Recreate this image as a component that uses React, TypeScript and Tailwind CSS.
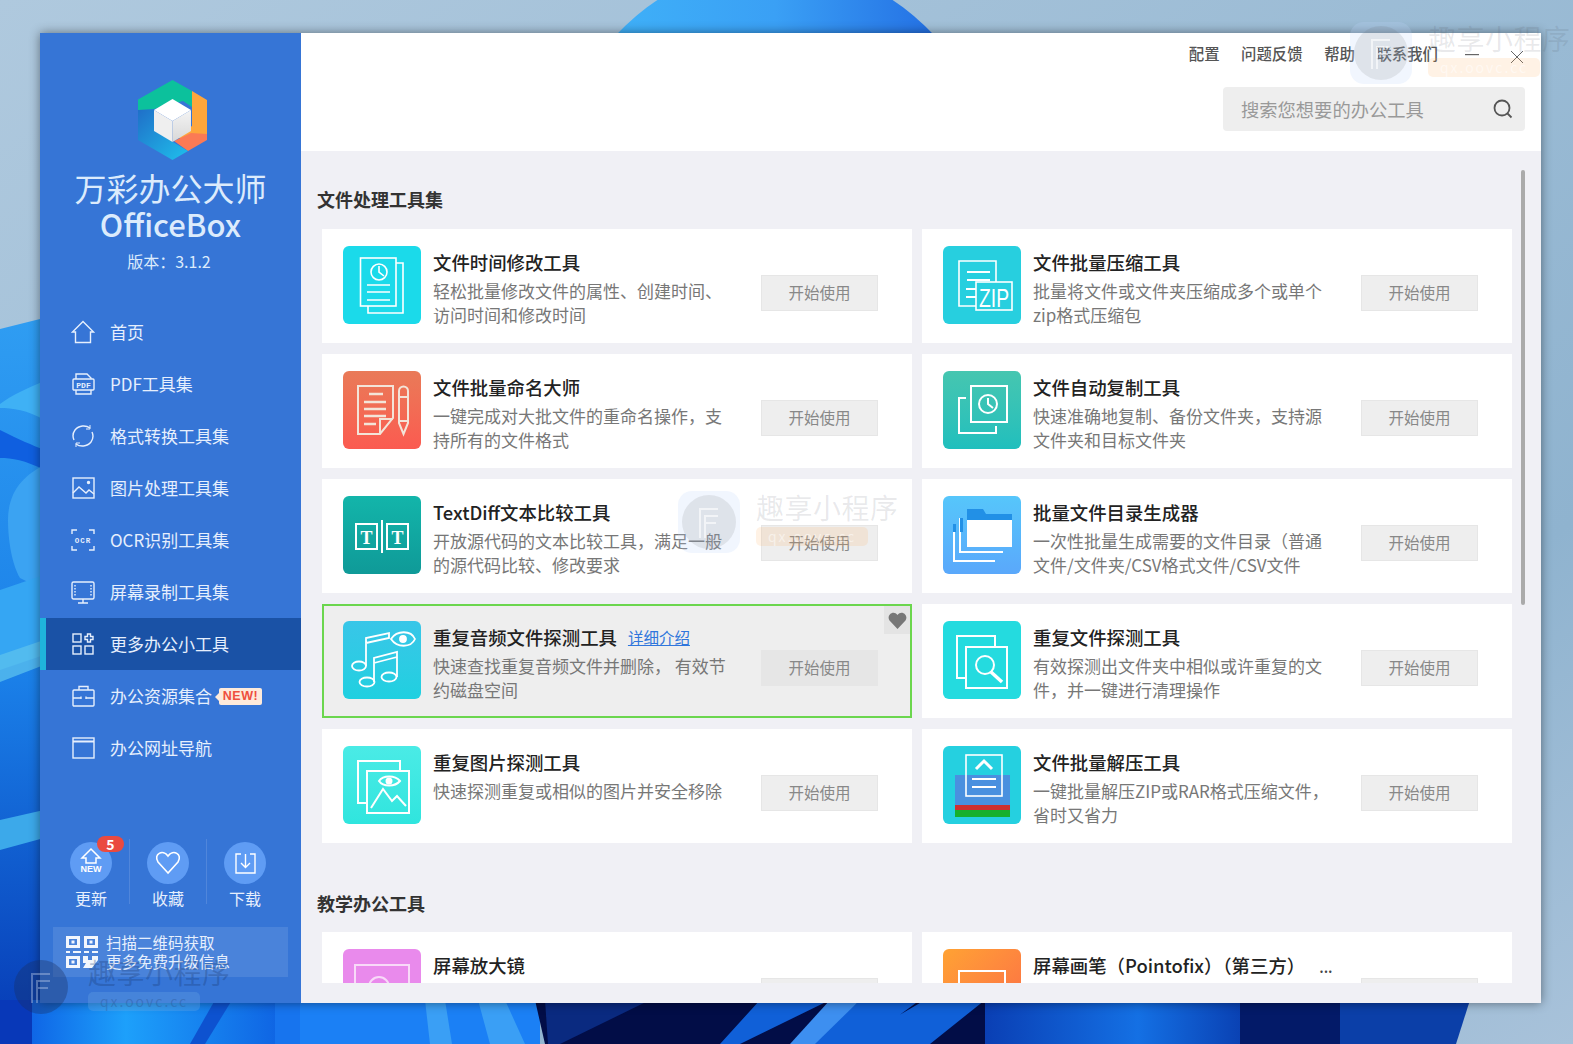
import { ReactNode } from 'react'

const FONT = '"Noto Sans CJK SC", "Noto Sans", sans-serif'

function Wallpaper() {
  return (
    <svg className="absolute inset-0" width="1573" height="1044" viewBox="0 0 1573 1044">
      <defs>
        <linearGradient id="sky" x1="0" y1="0" x2="1" y2="1">
          <stop offset="0" stopColor="#afc9de" />
          <stop offset="0.75" stopColor="#8fb3cf" />
          <stop offset="1" stopColor="#a8c2da" />
        </linearGradient>
        <linearGradient id="petal" x1="0" y1="0" x2="1" y2="0">
          <stop offset="0" stopColor="#3fb0f8" />
          <stop offset="0.5" stopColor="#3aa0f5" />
          <stop offset="1" stopColor="#2470e4" />
        </linearGradient>
        <linearGradient id="left" x1="0" y1="0" x2="0" y2="1">
          <stop offset="0" stopColor="#2f9df2" />
          <stop offset="0.5" stopColor="#1a7fe8" />
          <stop offset="1" stopColor="#0639b4" />
        </linearGradient>
        <linearGradient id="bright" x1="0" y1="0" x2="1" y2="0">
          <stop offset="0" stopColor="#0f66e6" />
          <stop offset="0.35" stopColor="#1da0fb" />
          <stop offset="1" stopColor="#0d5ce0" />
        </linearGradient>
        <linearGradient id="mid" x1="0" y1="0" x2="1" y2="0">
          <stop offset="0" stopColor="#0a3fb4" />
          <stop offset="0.6" stopColor="#1470e4" />
          <stop offset="1" stopColor="#0a42b4" />
        </linearGradient>
      </defs>
      <rect width="1573" height="1044" fill="url(#sky)" />
      <path d="M615 36C660 -10 700 -30 775 -30C850 -30 890 -10 935 36Z" fill="url(#petal)" />
      <path d="M0 329L44 318V1044H0Z" fill="url(#left)" />
      <path d="M0 404C12 395 28 388 44 381V420C28 410 12 408 0 408Z" fill="#3fb1f5" />
      <path d="M0 430C20 440 32 445 44 450V470C25 460 12 458 0 458Z" fill="#0f5fe0" />
      <path d="M8 520C8 490 25 475 44 465V590L20 578C12 565 8 540 8 520Z" fill="#3ba3f2" />
      <path d="M0 590L44 575V655L0 670Z" fill="#35a6f3" />
      <path d="M0 655L44 640V665L0 682Z" fill="#5cc2ee" opacity="0.75" />
      <path d="M0 820L44 810V838L0 850Z" fill="#3ca9ea" />
      <rect x="0" y="1000" width="32" height="44" fill="#0838b8" />
      <rect x="32" y="1000" width="268" height="44" fill="url(#bright)" />
      <path d="M215 1000H232L205 1044H190Z" fill="#0d52d0" />
      <rect x="275" y="1000" width="30" height="44" fill="#1774ee" />
      <rect x="300" y="1000" width="240" height="44" fill="#1b80f5" />
      <path d="M425 1000H445L452 1044H430ZM478 1000H505L525 1044H490Z" fill="#3a9ff5" />
      <path d="M535 1000H1000V1044H545Z" fill="#020d47" />
      <path d="M545 1000H650L560 1044H548Z" fill="#0a2a80" />
      <path d="M760 1000H830L740 1044H720ZM860 1000H920L860 1044H810ZM925 1000H985L930 1044H850Z" fill="#1060d8" />
      <path d="M830 1000H860L815 1044H790Z" fill="#3d8ff0" />
      <rect x="985" y="1000" width="255" height="44" fill="url(#mid)" />
      <rect x="1240" y="1000" width="100" height="44" fill="#031a68" />
      <path d="M1340 1000H1470L1456 1044H1340Z" fill="#0b3fa8" />
    </svg>
  )
}

function Watermark({ className, dark }: { className: string; dark?: boolean }) {
  return (
    <div className={`absolute flex items-start gap-[16px] pointer-events-none ${className}`}>
      <div className={`w-[62px] h-[62px] rounded-[14px] flex items-center justify-center ${dark ? '' : 'bg-[rgba(190,215,250,0.22)]'}`}>
        <div className={`w-[54px] h-[54px] rounded-full flex items-center justify-center ${dark ? 'bg-[rgba(25,45,95,0.35)]' : 'bg-[rgba(90,90,90,0.12)]'}`}>
          <svg width="24" height="32" viewBox="0 0 24 32" fill="none" stroke={dark ? 'rgba(190,205,235,0.4)' : 'rgba(255,255,255,0.6)'} strokeWidth="2">
            <path d="M3 32V3H21M8 32V10H21M8 17H19" />
          </svg>
        </div>
      </div>
      <div className="flex flex-col items-start -mt-[2px]">
        <div className={`text-[28px] leading-[36px] tracking-[0.5px] font-normal whitespace-nowrap ${dark ? 'text-[rgba(25,55,110,0.3)]' : 'text-[rgba(80,85,95,0.13)] font-bold'}`}>趣享小程序</div>
        <div className={`mt-[2px] w-[112px] h-[19px] rounded-[5px] text-[14px] leading-[19px] tracking-[2px] text-center ${dark ? 'bg-[rgba(110,170,230,0.3)] text-[rgba(40,80,140,0.35)]' : 'bg-[rgba(255,170,80,0.15)] text-[rgba(255,255,255,0.5)]'}`}>qx.oovc.cc</div>
      </div>
    </div>
  )
}

function Logo() {
  return (
    <svg width="70" height="80" viewBox="0 0 70 80" className="ml-[98px]">
      <defs>
        <linearGradient id="logoBlue" x1="0" y1="0" x2="1" y2="1">
          <stop offset="0" stopColor="#1f6fc8" />
          <stop offset="1" stopColor="#1fc0ec" />
        </linearGradient>
        <linearGradient id="cubeR" x1="0" y1="0" x2="0" y2="1">
          <stop offset="0" stopColor="#f4f4f4" />
          <stop offset="1" stopColor="#d8d8d8" />
        </linearGradient>
      </defs>
      <path d="M0 19.5L34.5 0L54 11V27L45 21L16 29L0 41Z" fill="#0cc19c" />
      <path d="M54 11L69 20V54L50 60L36 57L54 46Z" fill="#fea63c" />
      <path d="M36 61L53 53L69 54V60L50 71Z" fill="#fb7a55" />
      <path d="M0 30L16 29V50L35 62L50 71L34.5 80L0 60Z" fill="url(#logoBlue)" />
      <path d="M34.5 19L53 30L34.5 41L16 30Z" fill="#ffffff" />
      <path d="M16 30L34.5 41V62L16 51Z" fill="#efefef" />
      <path d="M53 30L34.5 41V62L53 51Z" fill="url(#cubeR)" />
    </svg>
  )
}

const navStroke = { fill: 'none', stroke: '#e6effd', strokeWidth: 1.4 }

function NavIcon({ children }: { children: ReactNode }) {
  return (
    <svg width="24" height="24" viewBox="0 0 24 24" className="shrink-0" {...navStroke}>
      {children}
    </svg>
  )
}

const navItems: { label: ReactNode; icon: ReactNode; active?: boolean }[] = [
  {
    label: '首页',
    icon: <path d="M1.5 12L12 1.5L22.5 12H19.5V22.5H4.5V12Z" />,
  },
  {
    label: 'PDF工具集',
    icon: (
      <>
        <path d="M5 7V2H16L20 6V7M5 18V22H20V18" />
        <rect x="2" y="7" width="21" height="11" rx="1" />
        <text x="12.5" y="15.6" fontSize="8" fontWeight="700" textAnchor="middle" fill="#e6effd" stroke="none" fontFamily="Liberation Mono">PDF</text>
      </>
    ),
  },
  {
    label: '格式转换工具集',
    icon: (
      <>
        <path d="M3 16A10 10 0 0 1 4 6C8 1 15 1 19 4" />
        <path d="M21 8A10 10 0 0 1 20 18C16 23 9 23 5 20" />
        <path d="M19 1V5H15M5 23V19H9" strokeWidth="1" />
      </>
    ),
  },
  {
    label: '图片处理工具集',
    icon: (
      <>
        <rect x="2" y="2" width="21" height="20" />
        <path d="M2 17L8 11L15 17L18 14L23 18" />
        <circle cx="17.5" cy="6.5" r="1" fill="#e6effd" />
      </>
    ),
  },
  {
    label: 'OCR识别工具集',
    icon: (
      <>
        <path d="M1 6V2H6M18 2H23V6M1 18V22H6M18 22H23V18" />
        <text x="12" y="15" fontSize="7.5" fontWeight="700" textAnchor="middle" letterSpacing="1" fill="#e6effd" stroke="none" fontFamily="Liberation Mono">OCR</text>
      </>
    ),
  },
  {
    label: '屏幕录制工具集',
    icon: (
      <>
        <rect x="1" y="2" width="22" height="17" rx="1.5" />
        <path d="M12 19V23M7 23H17" />
        <path d="M4 5V16M20 5V16" strokeDasharray="1.5 1.5" />
      </>
    ),
  },
  {
    label: '更多办公小工具',
    active: true,
    icon: (
      <>
        <rect x="2" y="2" width="8" height="8" />
        <rect x="2" y="14" width="8" height="8" />
        <rect x="14" y="14" width="8" height="8" />
        <path d="M16.5 2H19.5V4.5H22V7.5H19.5V10H16.5V7.5H14V4.5H16.5Z" />
      </>
    ),
  },
  {
    label: (
      <span className="flex items-center">
        办公资源集合
        <span className="ml-[7px] relative w-[43px] h-[17px] rounded-[2px] bg-[#fdeadb] text-[#ef4f3e] text-[12.5px] leading-[17px] font-bold text-center tracking-[0.5px]" style={{ fontFamily: '"Liberation Sans", sans-serif' }}>
          <span className="absolute -left-[4px] top-[5px] w-0 h-0 border-y-[4px] border-r-[4px] border-y-transparent border-r-[#fdeadb]" />
          NEW!
        </span>
      </span>
    ),
    icon: (
      <>
        <rect x="2" y="6" width="21" height="16" rx="1" />
        <path d="M8 6V2.5H17V6M2 14H10M15 14H23M10 12.5V15M15 12.5V15" />
      </>
    ),
  },
  {
    label: '办公网址导航',
    icon: (
      <>
        <rect x="2" y="2" width="21" height="20" />
        <path d="M2 5.5H23" strokeWidth="2" />
      </>
    ),
  },
]

function Sidebar() {
  return (
    <aside className="w-[261px] h-full shrink-0 bg-[#3675d6] flex flex-col">
      <div className="pt-[47px] text-center text-[#dcebfc]">
        <Logo />
        <div className="mt-[7px] text-[32px] leading-[40px]">万彩办公大师</div>
        <div className="text-[31px] leading-[33px] font-medium">OfficeBox</div>
        <div className="mt-[10px] text-[16px] leading-[22px] pr-[3px]">版本：3.1.2</div>
      </div>
      <nav className="mt-[34px]">
        {navItems.map((item, i) => (
          <div
            key={i}
            className={`h-[52px] flex items-center gap-[15px] text-[17px] text-[#e6effd] ${
              item.active ? 'bg-[#1a52a6] border-l-[6px] border-[#1fb4dc] pl-[25px]' : 'pl-[31px]'
            }`}
          >
            <NavIcon>{item.icon}</NavIcon>
            {item.label}
          </div>
        ))}
      </nav>
      <div className="mt-[68px] flex pl-[13px] pr-[18px]">
        <BottomAction label="更新" badge>
          <path d="M21 7L30 16H26V21H16V16H12Z" fill="none" stroke="#fff" strokeWidth="1.5" />
          <text x="21" y="30" fontSize="9" fontWeight="700" textAnchor="middle" fill="#fff" fontFamily="Liberation Sans">NEW</text>
        </BottomAction>
        <div className="w-px h-[65px] -mt-[3px] bg-[rgba(255,255,255,0.13)]" />
        <BottomAction label="收藏">
          <path d="M21 31L11 20C6 12 16 7 21 14C26 7 36 12 31 20Z" fill="none" stroke="#fff" strokeWidth="1.6" />
        </BottomAction>
        <div className="w-px h-[65px] -mt-[3px] bg-[rgba(255,255,255,0.13)]" />
        <BottomAction label="下载">
          <path d="M17 12H12V31H31V12H26M21.5 12V25M17 21L21.5 25.5L26 21" fill="none" stroke="#fff" strokeWidth="1.4" />
        </BottomAction>
      </div>
      <div className="mt-[18px] mx-[13px] h-[50px] bg-[rgba(255,255,255,0.1)] flex items-center gap-[8px] pl-[13px] text-[#e6effd] text-[15.5px] leading-[19px]">
        <svg width="32" height="32" viewBox="0 0 32 32" className="shrink-0" fill="#f2f6fd">
          <path fillRule="evenodd" d="M0 0H14V12H0ZM3 3V9H11V3ZM18 0H32V12H18ZM21 3V9H29V3ZM0 20H14V32H0ZM3 23V29H11V23Z" />
          <path d="M5.5 4.5H8.5V7.5H5.5ZM23.5 4.5H26.5V7.5H23.5ZM5.5 24.5H8.5V27.5H5.5ZM0 15H4V17H0ZM7 15H15V17H7ZM18 15H23V17H18ZM26 15H32V17H26ZM17 20H22V24H26V20H32V24L26 32H17L20 27H17Z" />
        </svg>
        <div className="whitespace-pre-line">{'扫描二维码获取\n更多免费升级信息'}</div>
      </div>
    </aside>
  )
}

function BottomAction({ label, badge, children }: { label: string; badge?: boolean; children: ReactNode }) {
  return (
    <div className="flex-1 relative flex flex-col items-center">
      <div className="w-[42px] h-[42px] rounded-full bg-[#5f9cf4]">
        <svg width="42" height="42" viewBox="0 0 42 42">{children}</svg>
      </div>
      <div className="mt-[3px] text-[16px] leading-[22px] text-[#e6effd]">{label}</div>
      {badge && (
        <div className="absolute left-[44px] -top-[6px] w-[27px] h-[16px] rounded-full bg-[#ea4a3f] text-white text-[14px] leading-[16px] font-bold text-center">5</div>
      )}
    </div>
  )
}

const line = { fill: 'none', stroke: '#ffffff', strokeWidth: 1.6 }

function IconTime() {
  return (
    <g {...line}>
      <path d="M53 17H60V67H25V60" />
      <rect x="17.5" y="12" width="35.5" height="48" />
      <circle cx="36" cy="26" r="8" />
      <path d="M36 20V26L41 30M24 39H47M24 46H47M24 54H47" />
    </g>
  )
}
function IconRename() {
  return (
    <g fill="none" stroke="#f3e4d8" strokeWidth="2">
      <path d="M15 62V15H50V47L37 63H15Z" />
      <path d="M37 63V48H50" />
      <path d="M26 23H40M21 31H43M21 38H43M21 45H43M21 53H33" strokeWidth="2.6" />
      <path d="M56 20A4.5 4.5 0 0 1 65 20V52L60.5 63L56 52Z" />
      <path d="M56 26H65M56 50H65" />
    </g>
  )
}
function IconDiff() {
  return (
    <g fill="none" stroke="#ffffff" strokeWidth="2">
      <path d="M13 53V28H34V53ZM65 53V28H44V53ZM39 24V57" />
      <text x="23.5" y="48" fontSize="18" fontWeight="700" textAnchor="middle" fill="#fff" stroke="none" fontFamily="Liberation Serif">T</text>
      <text x="54.5" y="48" fontSize="18" fontWeight="700" textAnchor="middle" fill="#fff" stroke="none" fontFamily="Liberation Serif">T</text>
    </g>
  )
}
function IconAudio() {
  return (
    <g {...line} strokeWidth="1.8">
      <ellipse cx="16" cy="45" rx="7" ry="4.5" />
      <ellipse cx="24" cy="61" rx="7.5" ry="4.5" />
      <ellipse cx="46" cy="56" rx="7.5" ry="4.5" />
      <path d="M23 45V17L46 12V17L23 22M31 61V37L54 31V56M31 42L54 36" />
      <path d="M48 18C54 9 68 9 72 18C68 27 54 27 48 18Z" />
      <circle cx="60" cy="18" r="3" fill="#fff" />
    </g>
  )
}
function IconImage() {
  return (
    <g fill="none" stroke="#ffffff" strokeWidth="2">
      <path d="M24 57H15V15H57V25" />
      <rect x="24" y="25" width="42" height="42" />
      <path d="M28 62L40 43L49 55L54 50L63 60" />
      <path d="M36 35C40 29 52 29 57 35C52 41 40 41 36 35Z" />
      <circle cx="46" cy="35" r="2.5" fill="#fff" />
    </g>
  )
}
function IconMagnifier() {
  return (
    <g fill="none" stroke="#f8d9f8" strokeWidth="2">
      <rect x="12" y="16" width="54" height="54" />
      <circle cx="36" cy="38" r="10" />
    </g>
  )
}
function IconZip() {
  return (
    <g {...line}>
      <path d="M53 36V15H16V60H33" />
      <path d="M24 26H47M24 34H47M23 43H33M23 51H33" strokeWidth="2" />
      <rect x="33" y="36" width="36" height="28" />
      <text x="36" y="61" fontSize="25" textLength="30" lengthAdjust="spacingAndGlyphs" fill="#fff" stroke="none" fontFamily="Liberation Sans">ZIP</text>
    </g>
  )
}
function IconCopy() {
  return (
    <g {...line} strokeWidth="2">
      <rect x="28" y="15" width="36" height="36" />
      <path d="M23 27H16V62H53V55" />
      <circle cx="45" cy="33" r="9" />
      <path d="M45 27V33L50 37" />
    </g>
  )
}
function IconDir() {
  return (
    <g>
      <path d="M24 13H40L43 18H69V28H24Z" fill="#2290e6" />
      <rect x="24" y="24" width="45" height="27" fill="#ffffff" />
      <path d="M17 22V56H60M11 28V65H52" fill="none" stroke="#fff" strokeWidth="2" />
      <path d="M17 22H20V36H17ZM10 28H13V36H10Z" fill="#2290e6" />
    </g>
  )
}
function IconDup() {
  return (
    <g fill="none" stroke="#ffffff" strokeWidth="2">
      <path d="M23 57H14V15H52V26" />
      <rect x="23" y="26" width="41" height="41" />
      <circle cx="42" cy="44" r="9" />
      <path d="M48 51L59 61" strokeWidth="3.5" />
    </g>
  )
}
function IconUnzip() {
  return (
    <g>
      <rect x="12" y="29" width="55" height="30" fill="#4a90df" />
      <rect x="12" y="59" width="55" height="5" fill="#d02f2f" />
      <rect x="12" y="64" width="55" height="7" fill="#16b02c" />
      <rect x="23" y="9" width="36" height="41" fill="none" stroke="#fff" strokeWidth="1.6" />
      <path d="M33 23L41 15L49 23" fill="none" stroke="#fff" strokeWidth="3" />
      <path d="M29 33H53M29 41H53" stroke="#fff" strokeWidth="2" />
    </g>
  )
}
function IconPen() {
  return (
    <g fill="none" stroke="#ffffff" strokeWidth="2">
      <rect x="16" y="22" width="46" height="46" />
      <path d="M28 50L36 58L52 40" />
    </g>
  )
}

type Tool = { title: string; desc: string; bg: string; icon: ReactNode; hover?: boolean }

const fileTools: Tool[] = [
  { title: '文件时间修改工具', desc: '轻松批量修改文件的属性、创建时间、\n访问时间和修改时间', bg: 'bg-[#1bdaea]', icon: <IconTime /> },
  { title: '文件批量压缩工具', desc: '批量将文件或文件夹压缩成多个或单个\nzip格式压缩包', bg: 'bg-[#27cfdf]', icon: <IconZip /> },
  { title: '文件批量命名大师', desc: '一键完成对大批文件的重命名操作，支\n持所有的文件格式', bg: 'bg-gradient-to-b from-[#e97a58] to-[#fb5a50]', icon: <IconRename /> },
  { title: '文件自动复制工具', desc: '快速准确地复制、备份文件夹，支持源\n文件夹和目标文件夹', bg: 'bg-gradient-to-b from-[#45c6b0] to-[#1fbfbd]', icon: <IconCopy /> },
  { title: 'TextDiff文本比较工具', desc: '开放源代码的文本比较工具，满足一般\n的源代码比较、修改要求', bg: 'bg-gradient-to-b from-[#13b5aa] to-[#0f9a98]', icon: <IconDiff /> },
  { title: '批量文件目录生成器', desc: '一次性批量生成需要的文件目录（普通\n文件/文件夹/CSV格式文件/CSV文件', bg: 'bg-gradient-to-b from-[#56c6fb] to-[#5aa8fb]', icon: <IconDir /> },
  { title: '重复音频文件探测工具', desc: '快速查找重复音频文件并删除， 有效节\n约磁盘空间', bg: 'bg-gradient-to-b from-[#38c6e8] to-[#1fd0e0]', icon: <IconAudio />, hover: true },
  { title: '重复文件探测工具', desc: '有效探测出文件夹中相似或许重复的文\n件，并一键进行清理操作', bg: 'bg-[#24dbdf]', icon: <IconDup /> },
  { title: '重复图片探测工具', desc: '快速探测重复或相似的图片并安全移除', bg: 'bg-gradient-to-b from-[#4aebe6] to-[#2fe5de]', icon: <IconImage /> },
  { title: '文件批量解压工具', desc: '一键批量解压ZIP或RAR格式压缩文件，\n省时又省力', bg: 'bg-[#25d0e0]', icon: <IconUnzip /> },
]

const teachTools: Tool[] = [
  { title: '屏幕放大镜', desc: '', bg: 'bg-[#e98aec]', icon: <IconMagnifier /> },
  { title: '屏幕画笔（Pointofix）（第三方）', desc: '', bg: 'bg-gradient-to-br from-[#ffa233] to-[#fb6a45]', icon: <IconPen /> },
]

function ToolCard({ tool, more }: { tool: Tool; more?: boolean }) {
  return (
    <div
      className={`relative h-[114px] pl-[21px] pt-[17px] flex ${
        tool.hover ? 'bg-[#eeeeee] outline-2 -outline-offset-2 outline-[#6bd64e]' : 'bg-white'
      }`}
    >
      <div className={`w-[78px] h-[78px] shrink-0 rounded-[6px] ${tool.bg}`}>
        <svg width="78" height="78" viewBox="0 0 78 78">{tool.icon}</svg>
      </div>
      <div className="ml-[12px] w-[312px] shrink-0">
        <div className="flex items-center h-[24px] mt-[4px] text-[18.4px] leading-[24px] text-[#222] font-medium whitespace-nowrap">
          {tool.title}
          {tool.hover && <span className="ml-[11px] text-[15.5px] font-normal text-[#2f76dc] underline">详细介绍</span>}
          {more && <span className="ml-[14px] text-[15px] text-[#444] pt-[4px]">...</span>}
        </div>
        <div className="mt-[5px] text-[17px] leading-[24px] text-[#777] whitespace-pre-line">{tool.desc}</div>
      </div>
      <div
        className={`ml-[16px] mt-[29px] w-[117px] h-[36px] border text-[15.5px] leading-[32px] text-[#888] text-center shrink-0 ${
          tool.hover ? 'bg-[#e6e6e6] border-[#e6e6e6]' : 'bg-[#eeeeee] border-[#e6e6e6]'
        }`}
      >
        开始使用
      </div>
      {tool.hover && (
        <div className="absolute right-[2px] top-[2px] w-[26px] h-[28px] bg-[#e4e4e4] flex items-center justify-center">
          <svg width="19" height="17" viewBox="0 0 19 17" fill="#777">
            <path d="M9.5 17L1.5 8.5C-2 3 5.5 -2.5 9.5 3C13.5 -2.5 21 3 17.5 8.5Z" />
          </svg>
        </div>
      )}
    </div>
  )
}

function Header() {
  return (
    <header className="h-[118px] bg-white relative shrink-0">
      <div className="flex items-center justify-end h-[40px] pt-[2px] pr-[103px] gap-[21.5px] text-[15.4px] text-[#555] font-medium">
        <span>配置</span>
        <span>问题反馈</span>
        <span>帮助</span>
        <span>联系我们</span>
      </div>
      <svg width="14" height="2" viewBox="0 0 14 2" className="absolute left-[1164px] top-[21px]">
        <rect width="14" height="1.2" fill="#666" />
      </svg>
      <svg width="14" height="14" viewBox="0 0 14 14" className="absolute left-[1209px] top-[17px]" fill="none" stroke="#666" strokeWidth="1">
        <path d="M1 1L13 13M13 1L1 13" />
      </svg>
      <div className="absolute right-[16px] top-[54px] w-[302px] h-[44px] rounded-[4px] bg-[#eeeeee] pl-[18px] pr-[12px] flex items-center justify-between">
        <span className="pt-[2px] text-[18.3px] text-[#999]">搜索您想要的办公工具</span>
        <svg width="20" height="20" viewBox="0 0 20 20" fill="none" stroke="#555" strokeWidth="1.8">
          <circle cx="9" cy="9" r="7.5" />
          <path d="M14.5 14.5L18.5 18.5" />
        </svg>
      </div>
    </header>
  )
}

function SectionTitle({ children, className }: { children: ReactNode; className: string }) {
  return <h2 className={`h-[28px] text-[18px] leading-[28px] font-bold text-[#333] ${className}`}>{children}</h2>
}

export default function App() {
  return (
    <div className="relative w-[1573px] h-[1044px] overflow-hidden" style={{ fontFamily: FONT }}>
      <Wallpaper />
      <div className="relative pt-[33px] pl-[40px]">
        <div className="w-[1501px] h-[970px] flex shadow-[0_0_10px_rgba(0,0,0,0.45)]">
          <Sidebar />
          <main className="flex-1 min-w-0 flex flex-col bg-[#f0f0f5] relative">
            <Header />
            <div className="h-[832px] overflow-hidden pl-[16px]">
              <SectionTitle className="mt-[34px] mb-[16px]">文件处理工具集</SectionTitle>
              <div className="ml-[5px] grid grid-cols-[590px_590px] gap-x-[10px] gap-y-[11px]">
                {fileTools.map((tool) => (
                  <ToolCard key={tool.title} tool={tool} />
                ))}
              </div>
              <SectionTitle className="mt-[46px] mb-[15px]">教学办公工具</SectionTitle>
              <div className="ml-[5px] grid grid-cols-[590px_590px] gap-x-[10px]">
                {teachTools.map((tool, i) => (
                  <ToolCard key={tool.title} tool={tool} more={i === 1} />
                ))}
              </div>
            </div>
            <div className="absolute left-[1220px] top-[137px] w-[4px] h-[435px] rounded-full bg-[#aaaaaa]" />
          </main>
        </div>
      </div>
      <Watermark className="left-[678px] top-[491px]" />
      <Watermark className="left-[1350px] top-[22px]" />
      <Watermark className="left-[10px] top-[956px]" dark />
    </div>
  )
}
